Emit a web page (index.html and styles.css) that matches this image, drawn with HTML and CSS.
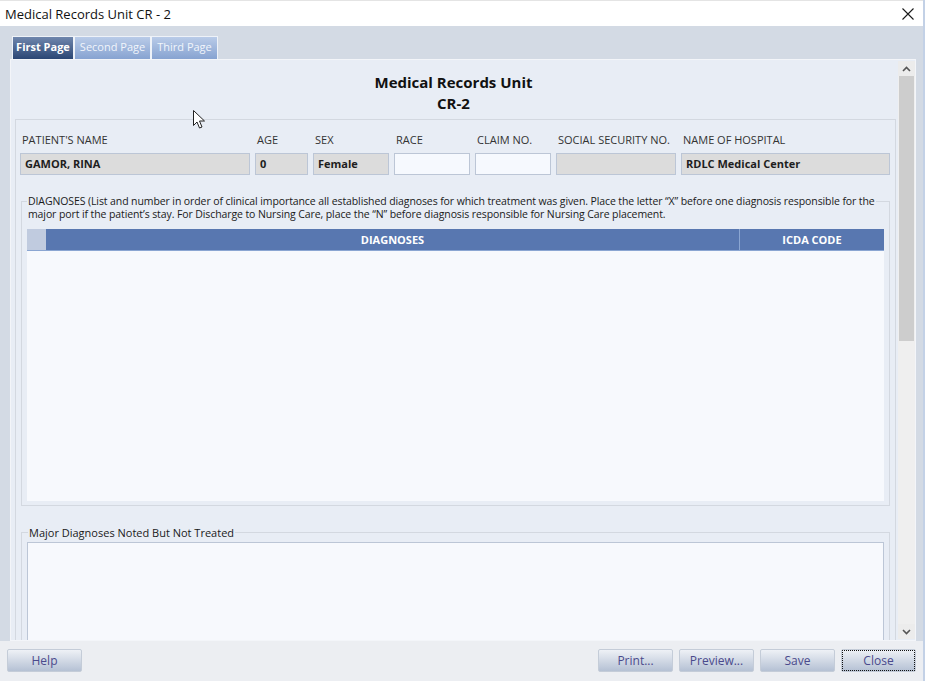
FILE: index.html
```html
<!DOCTYPE html>
<html lang="en">
<head>
    <meta charset="UTF-8">
    <link rel="stylesheet" href="styles.css">
</head>
<body>
<div class="window">
    <div class="titlebar">
        <span class="title">Medical Records Unit CR - 2</span>
        <svg class="close" width="12" height="12" viewBox="0 0 12 12"><path d="M0.5 0.5 L11.5 11.5 M11.5 0.5 L0.5 11.5" stroke="#1a1a1a" stroke-width="1.1" fill="none"/></svg>
    </div>

    <div class="client">
        <div class="tabs">
            <div class="tab tabAtivo">First Page</div>
            <div class="tab">Second Page</div>
            <div class="tab">Third Page</div>
        </div>

        <div class="tabpage">
            <div class="scrollarea">
                <div class="heading">Medical Records Unit<br>CR-2</div>

                <div class="groupbox">
                    <div class="campos">
                        <div class="campo"><div class="rotulo">PATIENT'S NAME</div><div class="caixa desab">GAMOR, RINA</div></div>
                        <div class="campo"><div class="rotulo">AGE</div><div class="caixa desab">0</div></div>
                        <div class="campo"><div class="rotulo">SEX</div><div class="caixa desab">Female</div></div>
                        <div class="campo"><div class="rotulo">RACE</div><div class="caixa"></div></div>
                        <div class="campo"><div class="rotulo">CLAIM NO.</div><div class="caixa"></div></div>
                        <div class="campo"><div class="rotulo">SOCIAL SECURITY NO.</div><div class="caixa desab"></div></div>
                        <div class="campo"><div class="rotulo">NAME OF HOSPITAL</div><div class="caixa desab">RDLC Medical Center</div></div>
                    </div>

                    <fieldset class="grupo grupoDiag">
                        <legend>DIAGNOSES (List and number in order of clinical importance all established diagnoses for which treatment was given. Place the letter “X” before one diagnosis responsible for the<br>major port if the patient’s stay. For Discharge to Nursing Care, place the “N” before diagnosis responsible for Nursing Care placement.</legend>
                        <div class="tabela">
                            <div class="cabecalho">
                                <div class="colSel"></div>
                                <div class="colDiag">DIAGNOSES</div>
                                <div class="colCode">ICDA CODE</div>
                            </div>
                            <div class="corpo"></div>
                        </div>
                    </fieldset>

                    <fieldset class="grupo grupoMajor">
                        <legend>Major Diagnoses Noted But Not Treated</legend>
                        <div class="textarea"></div>
                    </fieldset>
                </div>
            </div>

            <div class="vscroll">
                <div class="sbBotao"><svg width="9" height="6" viewBox="0 0 9 6"><path d="M1 5 L4.5 1.5 L8 5" stroke="#555" stroke-width="1.6" fill="none"/></svg></div>
                <div class="sbThumb"></div>
                <div class="sbTrilho"></div>
                <div class="sbBotao"><svg width="9" height="6" viewBox="0 0 9 6"><path d="M1 1 L4.5 4.5 L8 1" stroke="#555" stroke-width="1.6" fill="none"/></svg></div>
            </div>
        </div>
    </div>

    <div class="rodape">
        <button class="botao">Help</button>
        <div class="espaco"></div>
        <button class="botao">Print...</button>
        <button class="botao">Preview...</button>
        <button class="botao">Save</button>
        <button class="botao botaoFoco">Close</button>
    </div>

    <!-- ponteiro do mouse -->
    <svg class="cursor" width="13" height="20" viewBox="0 0 13 20"><path d="M0.5 0.5 L0.5 15.5 L4 12 L6.5 18 L9 17 L6.5 11 L11.5 11 Z" fill="#fff" stroke="#222" stroke-width="1"/></svg>
</div>
</body>
</html>
```

FILE: styles.css
```css
html, body {
    margin: 0;
    padding: 0;
    background-color: #c3d1e6;
}

body {
    font-family: "Open Sans", "Noto Sans", sans-serif;
    color: #222;
}

.window {
    position: relative;
    width: 923px;
    height: 681px;
    display: flex;
    flex-direction: column;
    background-color: #eceef2;
}

.titlebar {
    height: 26px;
    box-sizing: border-box;
    border-top: 1px solid #e4e4e4;
    background-color: #fff;
    display: flex;
    align-items: center;
    padding-left: 5px;
}

.title {
    font-size: 13px;
    color: #111;
    flex: 1;
}

.close {
    margin-right: 9px;
}

.client {
    height: 615px;
    box-sizing: border-box;
    background-color: #d3dae4;
    padding: 10px 7px 0 10px;
    display: flex;
    flex-direction: column;
}

.tabs {
    display: flex;
    height: 23px;
    padding-left: 2px;
}

.tab {
    box-sizing: border-box;
    height: 23px;
    border: 1px solid #eef2f8;
    border-bottom: none;
    background: linear-gradient(#b9cbe8, #87a3d1);
    color: #f1f5fb;
    font-size: 11px;
    line-height: 20px;
    text-align: center;
}

.tab:nth-child(1) { width: 62px; }
.tab:nth-child(2) { width: 77px; }
.tab:nth-child(3) { width: 67px; }

.tabAtivo {
    background: linear-gradient(#6f86ad, #2b4674);
    color: #fff;
    font-weight: bold;
}

.tabpage {
    height: 582px;
    box-sizing: border-box;
    border: 1px solid #f3f5f9;
    background-color: #e8edf5;
    display: flex;
}

.scrollarea {
    flex: 1;
    overflow: hidden;
    padding: 12px 2px 0 4px;
}

.heading {
    text-align: center;
    font-size: 15px;
    font-weight: bold;
    line-height: 21px;
    color: #111;
    margin-left: -4px;
}

.groupbox {
    margin-top: 5px;
    border: 1px solid #d3d8e0;
    padding: 13px 5px 0 4px;
    height: 600px;
}

.campos {
    display: grid;
    grid-template-columns: 230px 53px 76px 76px 76px 120px 209px;
    column-gap: 5px;
}

.rotulo {
    font-size: 11px;
    line-height: 14px;
    color: #333;
    padding-left: 2px;
    white-space: nowrap;
}

.caixa {
    margin-top: 6px;
    height: 22px;
    box-sizing: border-box;
    border: 1px solid #bcc6d6;
    background-color: #f6f9fe;
    font-size: 11px;
    font-weight: bold;
    line-height: 20px;
    padding-left: 4px;
    color: #1e1e1e;
    white-space: nowrap;
}

.desab {
    background-color: #dcdcdc;
}

.grupo {
    margin: 20px 0 0 1px;
    padding: 0 5px 4px 5px;
    border: 1px solid #d3d8e0;
    min-inline-size: 0;
}

.grupo legend {
    height: 13px;
    line-height: 13px;
    font-size: 11px;
    padding: 0 1px;
    white-space: nowrap;
    color: #1a1a1a;
}

.grupoDiag legend {
    font-size: 10.5px;
    letter-spacing: -0.1px;
}

.tabela {
    margin-top: 21px;
}

.cabecalho {
    display: flex;
    height: 22px;
    background-color: #5877b0;
    border-bottom: 1px solid #8ba6d2;
    box-sizing: border-box;
    color: #fff;
    font-size: 11px;
    font-weight: bold;
    line-height: 21px;
}

.colSel {
    width: 19px;
    background-color: #c0cbdf;
}

.colDiag {
    flex: 1;
    text-align: center;
    border-right: 1px solid #8ba6d2;
}

.colCode {
    width: 144px;
    text-align: center;
}

.corpo {
    height: 250px;
    background-color: #f7f9fd;
}

.grupoMajor legend {
    margin-left: 1px;
}

.textarea {
    margin-top: 3px;
    height: 200px;
    border: 1px solid #bcc6d6;
    background-color: #f7f9fd;
}

.vscroll {
    width: 17px;
    margin: 1px 0;
    background-color: #efefef;
    display: flex;
    flex-direction: column;
}

.sbBotao {
    height: 15px;
    display: flex;
    align-items: center;
    justify-content: center;
    background-color: #ececec;
}

.sbThumb {
    height: 265px;
    margin: 0 1px;
    background-color: #cdcdcd;
}

.sbTrilho {
    flex: 1;
}

.rodape {
    flex: 1;
    display: flex;
    padding: 8px 7px 0 7px;
    gap: 6px;
    align-items: flex-start;
    background-color: #eceef2;
}

.espaco {
    flex: 1;
}

.botao {
    width: 75px;
    height: 23px;
    border: 1px solid #c4ccd8;
    border-radius: 2px;
    background: linear-gradient(#eef1f6, #b5c1d4);
    color: #4a4a8c;
    font-family: "Open Sans", "Noto Sans", sans-serif;
    font-size: 12px;
    padding: 0;
}

.botaoFoco {
    outline: 1px dotted #111;
    outline-offset: -2px;
}

.cursor {
    position: absolute;
    left: 193px;
    top: 110px;
}
```
